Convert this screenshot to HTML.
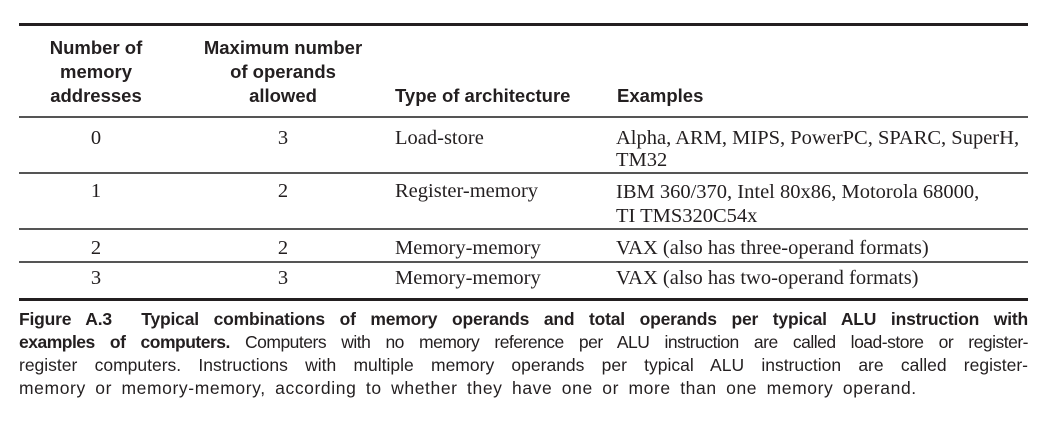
<!DOCTYPE html>
<html><head><style>
body{margin:0;width:1049px;height:435px;background:#fff;position:relative;overflow:hidden;color:#231f20}
.r{position:absolute;left:19px;width:1009px;background:#231f20}
.t{position:absolute;font-family:"Liberation Serif",serif;font-size:20.5px;line-height:22px;white-space:nowrap}
.h{position:absolute;font-family:"Liberation Sans",sans-serif;font-weight:bold;font-size:18.5px;line-height:24px;white-space:nowrap;text-align:center}
.c{position:absolute;left:19px;width:1009px;font-family:"Liberation Sans",sans-serif;font-size:17.5px;line-height:23px;white-space:nowrap;text-align:justify;text-align-last:justify}
.c.l{text-align-last:left}
</style></head><body>
<div class="r" style="top:23px;height:3px"></div>
<div class="r" style="top:116px;height:2px;background:#555"></div>
<div class="r" style="top:172px;height:2px;background:#555"></div>
<div class="r" style="top:228px;height:2px;background:#555"></div>
<div class="r" style="top:261px;height:2px;background:#555"></div>
<div class="r" style="top:298px;height:3px"></div>

<div class="h" style="left:26px;width:140px;top:36px">Number of<br>memory<br>addresses</div>
<div class="h" style="left:173px;width:220px;top:36px">Maximum number<br>of operands<br>allowed</div>
<div class="h" style="left:395px;top:84px;text-align:left">Type of architecture</div>
<div class="h" style="left:617px;top:84px;text-align:left">Examples</div>

<div class="t" style="left:86px;width:20px;text-align:center;top:127px">0</div>
<div class="t" style="left:273px;width:20px;text-align:center;top:127px">3</div>
<div class="t" style="left:395px;top:127px">Load-store</div>
<div class="t" style="left:616px;top:127px">Alpha, ARM, MIPS, PowerPC, SPARC, SuperH,<br>TM32</div>

<div class="t" style="left:86px;width:20px;text-align:center;top:180px">1</div>
<div class="t" style="left:273px;width:20px;text-align:center;top:180px">2</div>
<div class="t" style="left:395px;top:180px">Register-memory</div>
<div class="t" style="left:616px;top:180px;line-height:24px">IBM 360/370, Intel 80x86, Motorola 68000,<br>TI TMS320C54x</div>

<div class="t" style="left:86px;width:20px;text-align:center;top:237px">2</div>
<div class="t" style="left:273px;width:20px;text-align:center;top:237px">2</div>
<div class="t" style="left:395px;top:237px">Memory-memory</div>
<div class="t" style="left:616px;top:237px">VAX (also has three-operand formats)</div>

<div class="t" style="left:86px;width:20px;text-align:center;top:267px">3</div>
<div class="t" style="left:273px;width:20px;text-align:center;top:267px">3</div>
<div class="t" style="left:395px;top:267px">Memory-memory</div>
<div class="t" style="left:616px;top:267px">VAX (also has two-operand formats)</div>

<div class="c" style="top:308px;font-weight:bold;letter-spacing:-0.2px">Figure A.3&nbsp; Typical combinations of memory operands and total operands per typical ALU instruction with</div>
<div class="c" style="top:331px;letter-spacing:-0.5px"><b>examples of computers.</b> Computers with no memory reference per ALU instruction are called load-store or register-</div>
<div class="c" style="top:354px">register computers. Instructions with multiple memory operands per typical ALU instruction are called register-</div>
<div class="c l" style="top:377px;letter-spacing:0.6px;word-spacing:4px">memory or memory-memory, according to whether they have one or more than one memory operand.</div>
</body></html>
